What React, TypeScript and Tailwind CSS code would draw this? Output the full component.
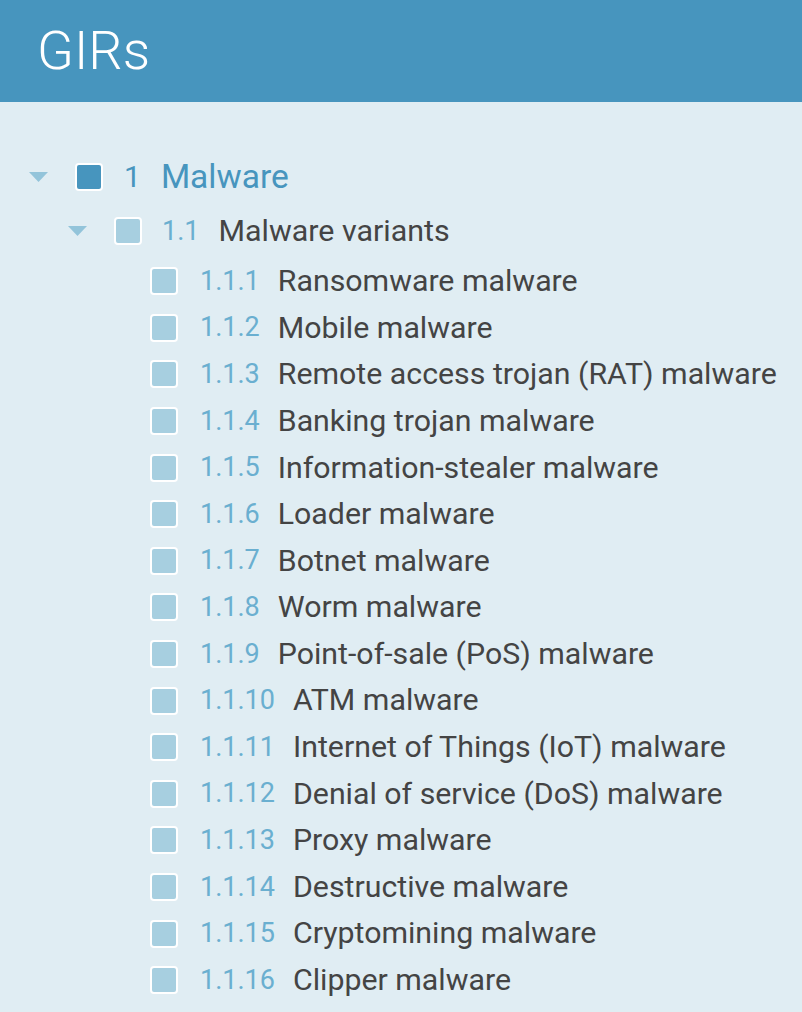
const items = [
  { num: '1.1.1', label: 'Ransomware malware' },
  { num: '1.1.2', label: 'Mobile malware' },
  { num: '1.1.3', label: 'Remote access trojan (RAT) malware' },
  { num: '1.1.4', label: 'Banking trojan malware' },
  { num: '1.1.5', label: 'Information-stealer malware' },
  { num: '1.1.6', label: 'Loader malware' },
  { num: '1.1.7', label: 'Botnet malware' },
  { num: '1.1.8', label: 'Worm malware' },
  { num: '1.1.9', label: 'Point-of-sale (PoS) malware' },
  { num: '1.1.10', label: 'ATM malware' },
  { num: '1.1.11', label: 'Internet of Things (IoT) malware' },
  { num: '1.1.12', label: 'Denial of service (DoS) malware' },
  { num: '1.1.13', label: 'Proxy malware' },
  { num: '1.1.14', label: 'Destructive malware' },
  { num: '1.1.15', label: 'Cryptomining malware' },
  { num: '1.1.16', label: 'Clipper malware' },
]

function Caret() {
  return (
    <svg width="19" height="10" viewBox="0 0 19 10" className="shrink-0">
      <path d="M0 0 L19 0 L9.5 10 Z" fill="#93c4da" />
    </svg>
  )
}

function Box({ dark }: { dark?: boolean }) {
  return (
    <span
      className={
        'block w-[28px] h-[28px] shrink-0 rounded-[4px] border-2 border-white ' +
        (dark ? 'bg-[#4795be]' : 'bg-[#a7cfe0]')
      }
    />
  )
}

export default function App() {
  return (
    <div className="min-h-screen bg-[#e0edf3] font-['Roboto',sans-serif]">
      {/* Header */}
      <header className="h-[102px] bg-[#4795be] flex items-center pl-[37px]">
        <h1 className="text-[54px] font-light text-white leading-none">GIRs</h1>
      </header>

      {/* Tree */}
      <main className="pt-[48px]">
        <div className="flex items-center h-[54px] pl-[29px]">
          <Caret />
          <span className="ml-[27px]"><Box dark /></span>
          <span className="ml-[21px] text-[30px] text-[#4795be] leading-none">1</span>
          <span className="ml-[20px] text-[33.5px] text-[#4795be] leading-none">Malware</span>
        </div>

        <div className="flex items-center h-[54px] pl-[68px]">
          <Caret />
          <span className="ml-[27px]"><Box /></span>
          <span className="ml-[20px] text-[27px] text-[#6aafd0] leading-none">1.1</span>
          <span className="ml-[19px] text-[30.4px] text-[#444444] leading-none">Malware variants</span>
        </div>

        {items.map((it) => (
          <div key={it.num} className="flex items-center h-[46.6px] pl-[150px]">
            <Box />
            <span className="ml-[22px] text-[27px] text-[#6aafd0] leading-none">{it.num}</span>
            <span className="ml-[18px] text-[30.3px] text-[#444444] leading-none">{it.label}</span>
          </div>
        ))}
      </main>
    </div>
  )
}
